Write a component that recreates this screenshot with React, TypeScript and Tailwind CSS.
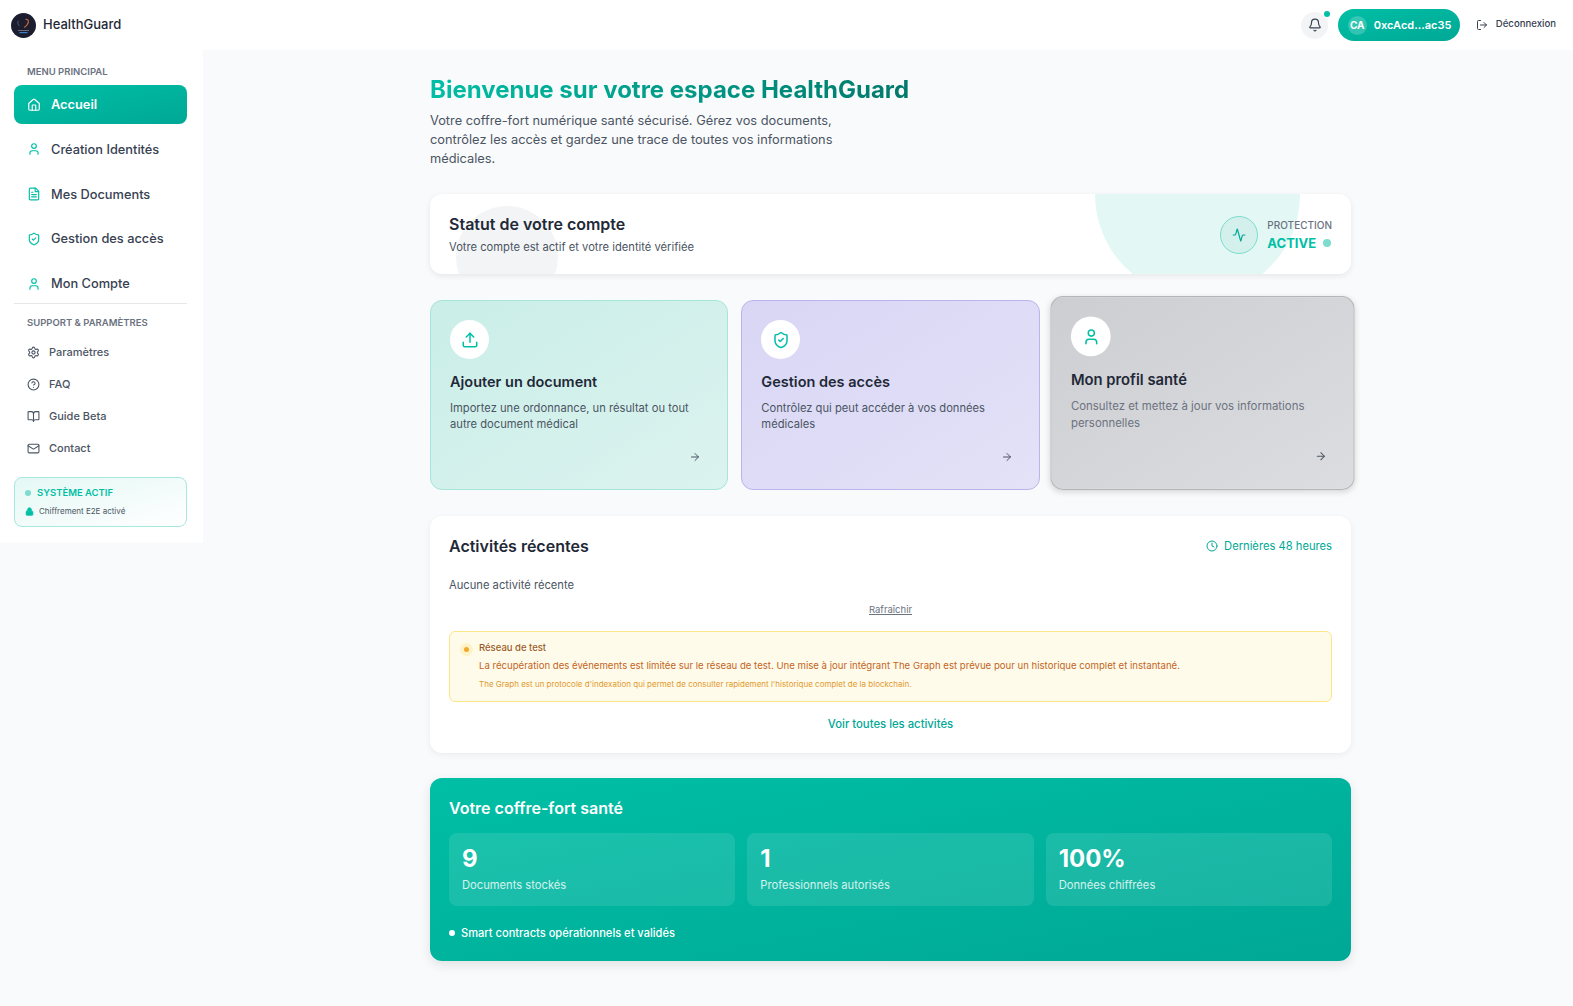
import React from "react";
import {
  Activity,
  ArrowRight,
  Bell,
  BookOpen,
  CircleHelp,
  Clock,
  FileText,
  House,
  Lock,
  LogOut,
  Mail,
  Settings,
  ShieldCheck,
  Upload,
  User,
} from "lucide-react";

const mainNav = [
  { label: "Création Identités", icon: User },
  { label: "Mes Documents", icon: FileText },
  { label: "Gestion des accès", icon: ShieldCheck },
  { label: "Mon Compte", icon: User },
];

const supportNav = [
  { label: "Paramètres", icon: Settings },
  { label: "FAQ", icon: CircleHelp },
  { label: "Guide Beta", icon: BookOpen },
  { label: "Contact", icon: Mail },
];

const stats = [
  { value: "9", label: "Documents stockés" },
  { value: "1", label: "Professionnels autorisés" },
  { value: "100%", label: "Données chiffrées" },
];

const Logo = () => (
  <svg width="25" height="25" viewBox="0 0 25 25" className="shrink-0">
    <circle cx="12.5" cy="12.5" r="12.5" fill="#1c1e30" />
    <path d="M7.5 8c-1.4 1.6-.6 3.6 1 5" fill="none" stroke="#555a72" strokeWidth="1" />
    <path d="M14.5 6.5c2-.6 3.2.8 2.8 2.8-.4 2-2 3.8-4 5.2" fill="none" stroke="#c0683c" strokeWidth="1.3" />
    <rect x="7" y="17" width="11" height="0.8" fill="#7b8094" />
    <rect x="8.5" y="19" width="8" height="1.2" fill="#3b82c4" />
  </svg>
);

const Header = () => (
  <header className="flex h-[50px] items-center justify-between bg-white pl-[11px] pr-[17px]">
    <div className="flex items-center gap-[7px]">
      <Logo />
      <span className="text-[13px] font-medium text-[#1f2937]">HealthGuard</span>
    </div>
    <div className="flex items-center">
      <div className="relative mr-[10px] flex h-[27px] w-[27px] items-center justify-center rounded-full bg-[#f3f4f6] pl-[1px]">
        <Bell size={14} className="text-[#374151]" />
        <span className="absolute -right-[2px] -top-[1px] h-[6px] w-[6px] rounded-full bg-[#00bfa5]" />
      </div>
      <div className="mr-[16px] flex h-[32px] w-[122px] items-center gap-[7px] rounded-full bg-gradient-to-br from-[#00bfa5] to-[#00a896] pl-[10px]">
        <span className="flex h-[19px] w-[19px] items-center justify-center rounded-full bg-white/20 text-[10px] font-bold text-white">
          CA
        </span>
        <span className="text-[11px] font-semibold text-white">0xcAcd...ac35</span>
      </div>
      <div className="flex items-center gap-[8px] text-[#374151]">
        <LogOut size={12} />
        <span className="pb-[2px] text-[9.6px] font-medium">Déconnexion</span>
      </div>
    </div>
  </header>
);

const Sidebar = () => (
  <aside className="w-[203px] shrink-0 bg-white pb-[16px] pl-[14px] pr-[16px] pt-[16px]">
    <p className="pl-[13px] text-[9.5px] font-semibold uppercase leading-[12px] text-[#6b7280]">Menu principal</p>
    <nav className="mt-[7px] flex flex-col gap-[5.8px]">
      <div className="flex h-[39px] items-center gap-[10px] rounded-lg bg-gradient-to-br from-[#00bfa5] to-[#00a896] pl-[13px] text-white">
        <House size={14} />
        <span className="text-[12.8px] font-semibold">Accueil</span>
      </div>
      {mainNav.map((item) => (
        <div key={item.label} className="flex h-[39px] items-center gap-[10px] pl-[13px] text-[#374151]">
          <item.icon size={14} className="text-[#00bfa5]" />
          <span className="text-[12.8px] font-medium">{item.label}</span>
        </div>
      ))}
    </nav>
    <div className="border-t border-[#e5e7eb] pt-[13px]">
      <p className="pl-[13px] text-[9.5px] font-semibold uppercase leading-[12px] text-[#6b7280]">Support &amp; paramètres</p>
      <div className="mt-[7px] flex flex-col">
        {supportNav.map((item) => (
          <div key={item.label} className="flex h-[32px] items-center gap-[9px] pl-[13px] text-[#4b5563]">
            <item.icon size={13} />
            <span className="text-[11px] font-medium">{item.label}</span>
          </div>
        ))}
      </div>
    </div>
    <div className="mt-[13px] h-[50px] rounded-lg border border-[#a5e8dd] bg-gradient-to-br from-[#e4f8f5] to-white px-[10px] pt-[8px]">
      <div className="flex items-center gap-[6px]">
        <span className="h-[6px] w-[6px] rounded-full bg-[#7ddccd]" />
        <span className="text-[9.5px] font-semibold text-[#00bfa5]">SYSTÈME ACTIF</span>
      </div>
      <div className="mt-[5px] flex items-center gap-[5px]">
        <Lock size={9} fill="#00bfa5" className="text-[#00bfa5]" />
        <span className="text-[8px] text-[#4b5563]">Chiffrement E2E activé</span>
      </div>
    </div>
  </aside>
);

const StatusCard = () => (
  <section className="relative mt-[26px] flex h-[80px] items-center justify-between overflow-hidden rounded-xl bg-white px-[19px] shadow-[0_2px_6px_rgba(0,0,0,0.08)]">
    <span className="absolute left-[26px] top-[12px] h-[102px] w-[102px] rounded-full bg-[#f3f4f6]" />
    <span className="absolute right-[51px] top-[-102px] h-[205px] w-[205px] rounded-full bg-[#e3f8f5]" />
    <div className="relative">
      <h2 className="text-[16px] font-semibold leading-[22px] text-[#1f2937]">Statut de votre compte</h2>
      <p className="mt-[4px] text-[11.2px] leading-[16px] text-[#4b5563]">Votre compte est actif et votre identité vérifiée</p>
    </div>
    <div className="relative flex items-center gap-[9px] pt-[1px]">
      <span className="flex h-[38px] w-[38px] items-center justify-center rounded-full border border-[#7ddccd] bg-[#d3f0ec]">
        <Activity size={14} className="text-[#00a896]" />
      </span>
      <div>
        <p className="text-[10px] font-medium leading-[14px] text-[#6b7280]">PROTECTION</p>
        <p className="mt-[2px] flex items-center gap-[7px] text-[13px] font-bold leading-[18px] text-[#00bfa5]">
          ACTIVE
          <span className="h-[8px] w-[8px] rounded-full bg-[#7ddccd]" />
        </p>
      </div>
    </div>
  </section>
);

const ActionCard = ({
  icon: Icon,
  title,
  text,
  className,
  textColor,
}: {
  icon: React.ComponentType<{ size?: number; className?: string }>;
  title: string;
  text: string;
  className: string;
  textColor: string;
}) => (
  <div className={`relative h-[190px] rounded-xl border px-[19px] pt-[19px] ${className}`}>
    <span className="flex h-[39px] w-[39px] items-center justify-center rounded-full bg-white">
      <Icon size={18} className="text-[#00bfa5]" />
    </span>
    <h3 className="mt-[13px] text-[14.5px] font-semibold leading-[20px] text-[#1f2937]">{title}</h3>
    <p className={`mt-[8px] text-[11.2px] leading-[16px] ${textColor}`}>{text}</p>
    <ArrowRight size={12} className="absolute bottom-[26px] right-[26px] text-[#4b5563]" />
  </div>
);

const Activities = () => (
  <section className="mt-[26px] rounded-xl bg-white px-[19px] pb-[21px] pt-[19px] shadow-[0_2px_6px_rgba(0,0,0,0.06)]">
    <div className="flex items-center justify-between">
      <h2 className="text-[16px] font-semibold leading-[22px] text-[#1f2937]">Activités récentes</h2>
      <span className="flex items-center gap-[6px] text-[11.2px] text-[#00a896]">
        <Clock size={12} />
        Dernières 48 heures
      </span>
    </div>
    <p className="mt-[20px] text-[11.2px] leading-[16px] text-[#4b5563]">Aucune activité récente</p>
    <p className="mt-[10px] text-center text-[9.5px] leading-[14px] text-[#6b7280] underline">Rafraîchir</p>
    <div className="mt-[14px] flex h-[71px] rounded-md border border-[#fde68a] bg-[#fffbeb] pl-[10px] pt-[9px]">
      <span className="mt-[2px] flex h-[13px] w-[13px] shrink-0 items-center justify-center rounded-full bg-[#fef3c7]">
        <span className="h-[5px] w-[5px] rounded-full bg-[#f0a92e]" />
      </span>
      <div className="ml-[6px]">
        <p className="text-[9.5px] font-medium leading-[14px] text-[#9a5b28]">Réseau de test</p>
        <p className="mt-[4px] text-[9.6px] leading-[14px] text-[#c2651c]">
          La récupération des événements est limitée sur le réseau de test. Une mise à jour intégrant The Graph est prévue pour un historique complet et instantané.
        </p>
        <p className="mt-[4px] text-[8px] leading-[14px] text-[#e09a2b]">
          The Graph est un protocole d'indexation qui permet de consulter rapidement l'historique complet de la blockchain.
        </p>
      </div>
    </div>
    <p className="mt-[14px] text-center text-[11.3px] font-medium leading-[16px] text-[#00a896]">Voir toutes les activités</p>
  </section>
);

const Vault = () => (
  <section className="mt-[25px] h-[183px] rounded-xl bg-gradient-to-br from-[#00bfa5] to-[#00a896] px-[19px] pt-[19px] shadow-[0_4px_12px_rgba(0,0,0,0.1)]">
    <h2 className="text-[16px] font-semibold leading-[22px] text-white">Votre coffre-fort santé</h2>
    <div className="mt-[14px] grid grid-cols-3 gap-[12px]">
      {stats.map((stat) => (
        <div key={stat.label} className="h-[73px] rounded-lg bg-white/10 pl-[13px] pt-[10px]">
          <p className="text-[24px] font-bold leading-[32px] text-white">{stat.value}</p>
          <p className="mt-[2px] text-[11.2px] leading-[16px] text-white/80">{stat.label}</p>
        </div>
      ))}
    </div>
    <div className="mt-[19px] flex items-center gap-[6px] text-[11.1px] font-medium text-white">
      <span className="h-[6px] w-[6px] rounded-full bg-white" />
      Smart contracts opérationnels et validés
    </div>
  </section>
);

export default function App() {
  return (
    <div className="min-h-screen bg-[#f9fafb] font-['Inter',sans-serif]">
      <Header />
      <div className="flex items-start">
        <Sidebar />
        <main className="pl-[227px] pt-[25px]">
          <div className="w-[921px]">
            <h1 className="inline-block bg-gradient-to-r from-[#00bfa5] to-[#00796b] bg-clip-text text-[24px] font-bold leading-[30px] text-transparent">
              Bienvenue sur votre espace HealthGuard
            </h1>
            <p className="mt-[6px] w-[420px] text-[12.8px] leading-[19px] text-[#4b5563]">
              Votre coffre-fort numérique santé sécurisé. Gérez vos documents, contrôlez les accès et gardez une trace de toutes vos informations médicales.
            </p>
            <StatusCard />
            <div className="mt-[26px] grid grid-cols-3 gap-[13px]">
              <ActionCard
                icon={Upload}
                title="Ajouter un document"
                text="Importez une ordonnance, un résultat ou tout autre document médical"
                className="border-[#a5e5da] bg-gradient-to-br from-[#caeee8] to-[#dcf3ef]"
                textColor="text-[#4b5563]"
              />
              <ActionCard
                icon={ShieldCheck}
                title="Gestion des accès"
                text="Contrôlez qui peut accéder à vos données médicales"
                className="border-[#b8b5ec] bg-gradient-to-br from-[#d9d6f5] to-[#e3e2f7]"
                textColor="text-[#4b5563]"
              />
              <ActionCard
                icon={User}
                title="Mon profil santé"
                text="Consultez et mettez à jour vos informations personnelles"
                className="-translate-y-[2px] translate-x-[0.5px] scale-[1.02] border-[#b4b5b9] bg-gradient-to-br from-[#cdced2] to-[#dcdde0] shadow-[0_2px_6px_rgba(0,0,0,0.15)]"
                textColor="text-[#6b7280]"
              />
            </div>
            <Activities />
            <Vault />
          </div>
        </main>
      </div>
    </div>
  );
}
